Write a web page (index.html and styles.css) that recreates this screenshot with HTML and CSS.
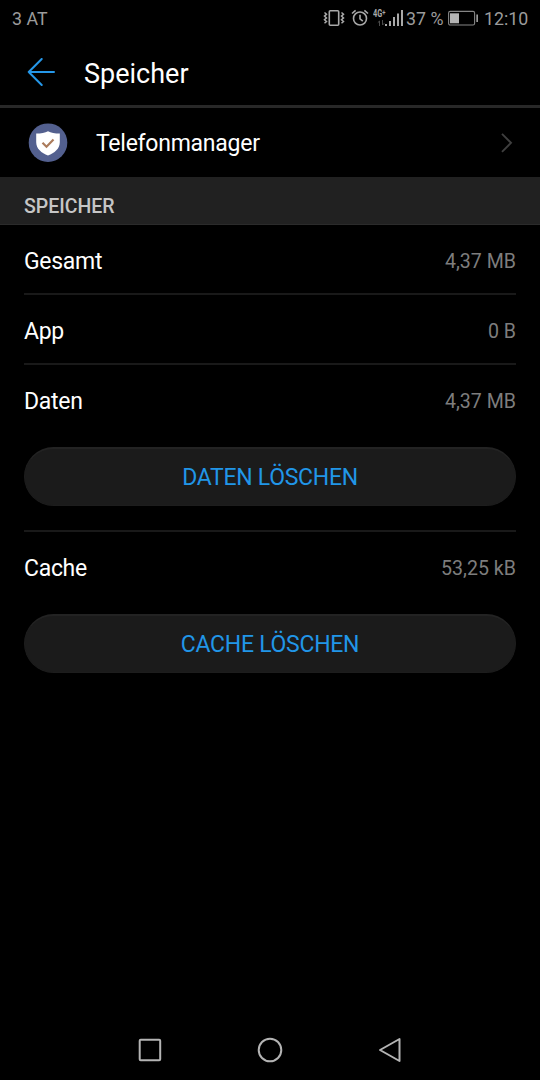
FILE: index.html
```html
<!DOCTYPE html>
<html lang="de">
<head>
<meta charset="utf-8">
<title>Speicher</title>
<link rel="stylesheet" href="styles.css">
</head>
<body>
<div class="screen">
  <div class="status">
    <span class="carrier">3 AT</span>
    <div class="status-right">
      <svg class="vibrate" width="24" height="20" viewBox="0 0 24 20" fill="none" stroke="#a8a8a8">
        <rect x="7.300" y="2.800" width="9.400" height="14.400" rx="1" stroke-width="1.600"/>
        <path d="M2.500 4.500l2 1.800-2 1.800 2 1.800-2 1.800 2 1.800-2 1.800M19.500 4.500l2 1.800-2 1.800 2 1.800-2 1.800 2 1.800-2 1.800" stroke-width="1.500"/>
      </svg>
      <svg class="alarm" width="18" height="20" viewBox="0 0 18 20" fill="none" stroke="#a8a8a8" stroke-width="1.600">
        <circle cx="9" cy="10.500" r="6.500"/>
        <path d="M9 6.800v4l2.800 2.400M1 5.500l3.600-3.200M17 5.500l-3.600-3.200"/>
      </svg>
      <div class="network">
        <span class="network-type">4G<span class="plus">+</span></span>
        <svg class="traffic" width="8" height="6" viewBox="0 0 8 6" fill="none" stroke="#4c4c4c">
          <path d="M2.500 6V1M.8 2.700L2.500 1M5.500 0v5M7.200 3.300L5.500 5"/>
        </svg>
      </div>
      <svg class="signal" width="18" height="18" viewBox="0 0 18 18" fill="#a8a8a8">
        <path d="M0 15h2v2H0zM4 12h2v5H4zM8 8h2v9H8zM12 4.500h2V17h-2zM16 1h2v16h-2z"/>
      </svg>
      <span class="percent">37 %</span>
      <svg class="battery" width="31" height="16" viewBox="0 0 31 16" fill="none">
        <rect x=".6" y="1.400" width="26" height="13.600" rx="1.600" stroke="#858585" stroke-width="1.100"/>
        <path d="M2 3.300h9v10H2z" fill="#b4b4b4"/>
        <path d="M28.300 4.500h1.700v7.600h-1.700z" fill="#999"/>
      </svg>
      <span class="time">12:10</span>
    </div>
  </div>

  <header class="header">
    <svg class="back" width="28" height="28" viewBox="0 0 28 28" fill="none" stroke="#2597e8" stroke-width="2" stroke-linecap="round" stroke-linejoin="round">
      <path d="M14.700 1L1.700 14l13 13M1.700 14H27"/>
    </svg>
    <h1 class="title">Speicher</h1>
  </header>

  <div class="app-row">
    <svg class="app-icon" width="40" height="40" viewBox="0 0 40 40">
      <circle cx="20" cy="19.700" r="19.300" fill="#53608f"/>
      <path d="M20 8.200c2.800 1.700 7 2.300 11.800 2.300v8.700c0 6.600-5.300 10.600-11.800 13.300-6.500-2.700-11.800-6.700-11.800-13.300v-8.700c4.800 0 9-.6 11.800-2.300z" fill="#fff"/>
      <path d="M14.500 19.700l4 4 7-7.100" fill="none" stroke="#ac7c5c" stroke-width="2.200"/>
    </svg>
    <span class="app-name">Telefonmanager</span>
    <svg class="chevron" width="12" height="20" viewBox="0 0 12 20" fill="none" stroke="#3f3f3f" stroke-width="1.900">
      <path d="M1 .8L10 9.800l-9 9"/>
    </svg>
  </div>

  <h2 class="section">SPEICHER</h2>

  <main class="list">
    <div class="item line"><span>Gesamt</span><span class="value">4,37 MB</span></div>
    <div class="item line"><span>App</span><span class="value">0 B</span></div>
    <div class="group line">
      <div class="item"><span>Daten</span><span class="value">4,37 MB</span></div>
      <button class="action">DATEN LÖSCHEN</button>
    </div>
    <div class="group">
      <div class="item"><span>Cache</span><span class="value">53,25 kB</span></div>
      <button class="action">CACHE LÖSCHEN</button>
    </div>
  </main>

  <nav class="nav">
    <svg width="28" height="28" viewBox="0 0 28 28" fill="none" stroke="#b4b4b4" stroke-width="2"><rect x="3.700" y="3.800" width="20.500" height="20.500" rx="1"/></svg>
    <svg width="28" height="28" viewBox="0 0 28 28" fill="none" stroke="#b4b4b4" stroke-width="2"><circle cx="14" cy="14" r="11.300"/></svg>
    <svg width="28" height="28" viewBox="0 0 28 28" fill="none" stroke="#b4b4b4" stroke-width="2" stroke-linejoin="round"><path d="M23.500 3v22L4 14z"/></svg>
  </nav>
</div>
</body>
</html>
```
FILE: styles.css
```css
* { box-sizing: border-box; }
body { margin: 0; background: #000; font-family: Roboto, sans-serif; color: #fff; }
svg { display: block; flex: none; }
.screen { width: 540px; height: 1080px; background: #000; display: flex; flex-direction: column; }
.status { height: 36px; padding: 0 12px; display: flex; align-items: center; justify-content: space-between; color: #9b9b9b; font-size: 17.8px; white-space: nowrap; }
.carrier { padding-top: 1px; }
.status-right { display: flex; align-items: center; }
.vibrate { margin-right: 5px; }
.network { width: 14px; height: 18px; margin-left: 4px; display: flex; flex-direction: column; align-items: flex-start; }
.network-type { height: 10px; font: bold 10px/10px Roboto, sans-serif; color: #a8a8a8; transform: scaleX(.74); transform-origin: left; }
.plus { font-size: 8px; vertical-align: 2px; line-height: 1; }
.traffic { margin: 1px 0 0 4px; }
.signal { margin-left: -2px; }
.percent { width: 38px; margin-left: 3px; padding-top: 1px; }
.battery { margin-left: 4px; }
.time { width: 44px; margin-left: 5px; padding-top: 1px; }
.header { height: 72px; border-bottom: 3px solid #282828; padding: 2px 27px 0; display: flex; align-items: center; }
.title { margin: 4px 0 0 29px; font-size: 27px; font-weight: 400; }
.app-row { height: 69px; padding: 0 27px 0 28px; display: flex; align-items: center; }
.app-name { flex: 1; margin-left: 28px; padding-top: 2px; font-size: 23px; letter-spacing: -.25px; }
.section { height: 48px; margin: 0; padding: 10px 24px 0; background: #212121; border-bottom: 1px solid #2b2b2b; color: #c6c6c6; font-size: 19.5px; font-weight: 500; line-height: 39px; }
.list { padding: 0 24px; }
.item { height: 70px; padding-top: 2px; display: flex; align-items: center; justify-content: space-between; font-size: 23px; letter-spacing: -.3px; }
.item.line { padding-top: 4px; }
.line { border-bottom: 2px solid #191919; }
.value { color: #7d7d7d; font-size: 19.6px; letter-spacing: 0; }
.group { height: 167px; }
.action { display: block; width: 100%; height: 59px; margin-top: 12px; padding: 0; border: 1px solid #1d1d1d; border-top: 2px solid #232323; border-radius: 30px; background: #1b1b1b; color: #2196e8; font: 400 23px Roboto, sans-serif; letter-spacing: -.28px; }
.nav { height: 60px; margin-top: auto; padding: 0 136px; display: flex; align-items: center; justify-content: space-between; }
```
